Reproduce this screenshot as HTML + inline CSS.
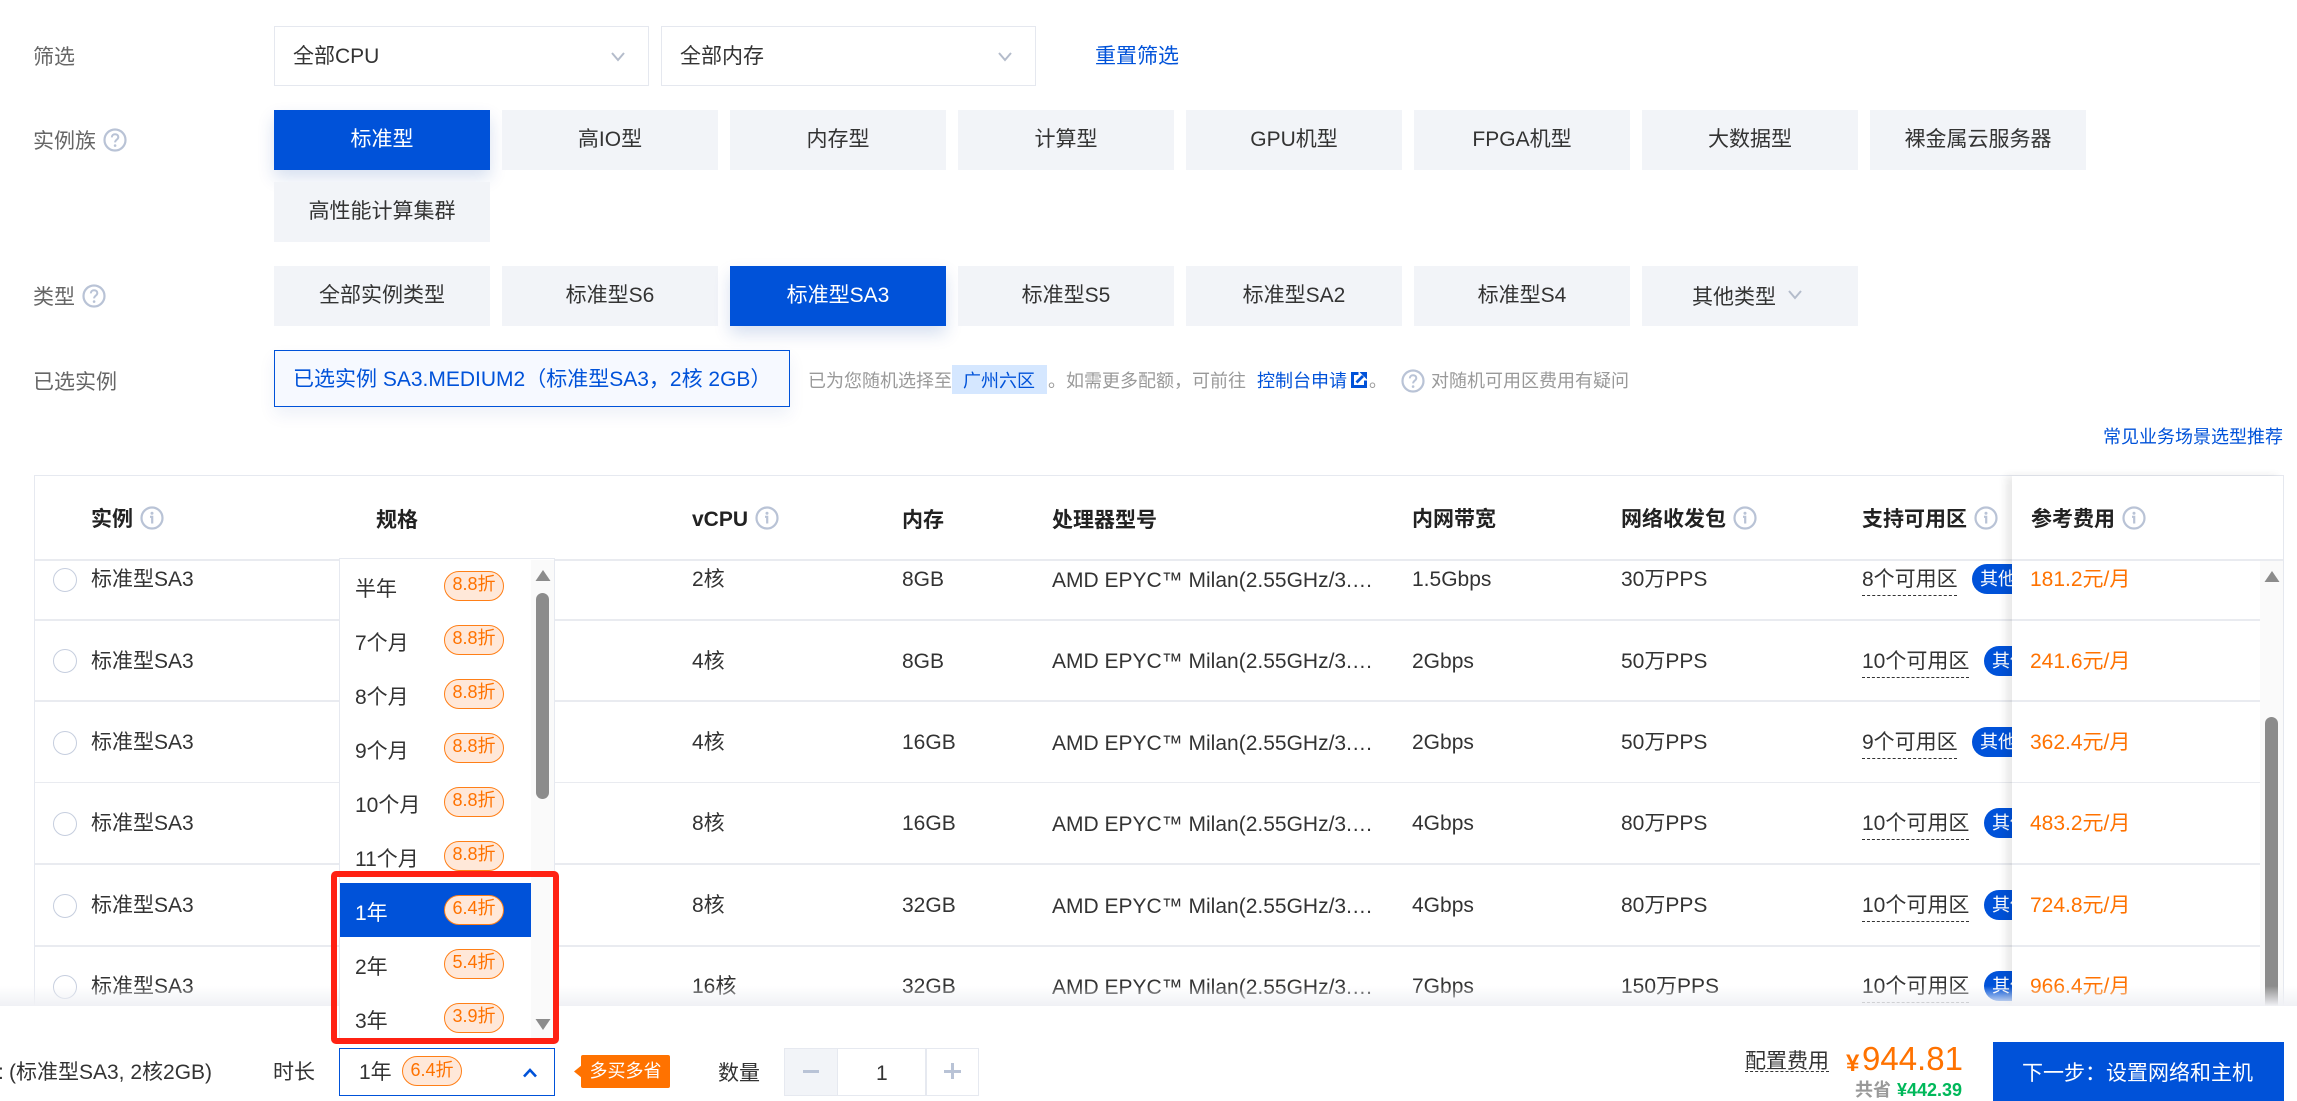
<!DOCTYPE html>
<html lang="zh-CN"><head><meta charset="utf-8"><title>实例选择</title>
<style>
html,body{margin:0;padding:0;width:2297px;height:1101px;overflow:hidden;background:#fff}
body{position:relative;font-family:"Liberation Sans","Noto Sans CJK SC",sans-serif;font-size:21px;color:#333}
.t{position:absolute;white-space:nowrap;line-height:30px;height:30px;margin-top:1.5px}
.t.c{margin-top:.5px}
.l{color:#666}
.b{font-weight:bold;color:#222}
.a{color:#0052d9}
.box{position:absolute;box-sizing:border-box}
.btn{position:absolute;width:216px;height:60px;line-height:60.5px;background:#f2f4f8;text-align:center;color:#333;white-space:nowrap}
.sel{background:#0052d9;color:#fff;box-shadow:0 8px 16px rgba(0,60,160,.16)}
.sv{position:absolute}
.h{position:absolute;height:1.5px;background:#e9ebf0;left:35px;width:2225px}
.r{position:absolute;left:53px;width:24px;height:24px;box-sizing:border-box;border:1.5px solid #c6cede;border-radius:50%;background:#fff}
.u{position:absolute;height:0;border-bottom:1.5px dashed #333}
.tag{position:absolute;height:30px;line-height:30px;width:60px;background:#0052d9;color:#fff;font-size:18px;border-radius:15px;padding-left:8px;box-sizing:border-box;white-space:nowrap}
.p{color:#ff7200}
.pill{position:absolute;box-sizing:border-box;left:444px;width:60px;height:30px;line-height:24px;border:1.5px solid #ff7f17;background:#ffe8d9;color:#ff7200;border-radius:15px;font-size:18px;text-align:center;white-space:nowrap}
</style></head><body>

<!-- filter row -->
<div class="t l" style="left:33px;top:41px">筛选</div>
<div class="box" style="left:274px;top:26px;width:375px;height:60px;border:1.5px solid #e5e8ef"></div>
<div class="t" style="left:293px;top:40px">全部CPU</div>
<svg class="sv" style="left:610px;top:51px" width="16" height="12" viewBox="0 0 16 12"><path d="M2 2l6 7 6-7" fill="none" stroke="#b4bccb" stroke-width="2"/></svg>
<div class="box" style="left:661px;top:26px;width:375px;height:60px;border:1.5px solid #e5e8ef"></div>
<div class="t" style="left:680px;top:40px">全部内存</div>
<svg class="sv" style="left:997px;top:51px" width="16" height="12" viewBox="0 0 16 12"><path d="M2 2l6 7 6-7" fill="none" stroke="#b4bccb" stroke-width="2"/></svg>
<div class="t a" style="left:1095px;top:40px">重置筛选</div>

<!-- family -->
<div class="t l" style="left:33px;top:125px">实例族</div>
<svg class="sv" style="left:103px;top:128px" width="24" height="24" viewBox="0 0 24 24"><circle cx="12" cy="12" r="10.5" fill="none" stroke="#b9c3d6" stroke-width="2.2"/><path d="M8.8 9.4c0-2 1.4-3.2 3.3-3.2s3.2 1.2 3.2 2.9c0 2.5-3.2 2.6-3.2 5.3" fill="none" stroke="#b9c3d6" stroke-width="2"/><circle cx="12.1" cy="17.6" r="1.3" fill="#b9c3d6"/></svg>
<div class="btn sel" style="left:274px;top:110px">标准型</div>
<div class="btn" style="left:502px;top:110px">高IO型</div>
<div class="btn" style="left:730px;top:110px">内存型</div>
<div class="btn" style="left:958px;top:110px">计算型</div>
<div class="btn" style="left:1186px;top:110px">GPU机型</div>
<div class="btn" style="left:1414px;top:110px">FPGA机型</div>
<div class="btn" style="left:1642px;top:110px">大数据型</div>
<div class="btn" style="left:1870px;top:110px">裸金属云服务器</div>
<div class="btn" style="left:274px;top:182px">高性能计算集群</div>

<!-- type -->
<div class="t l" style="left:33px;top:281px">类型</div>
<svg class="sv" style="left:82px;top:284px" width="24" height="24" viewBox="0 0 24 24"><circle cx="12" cy="12" r="10.5" fill="none" stroke="#b9c3d6" stroke-width="2.2"/><path d="M8.8 9.4c0-2 1.4-3.2 3.3-3.2s3.2 1.2 3.2 2.9c0 2.5-3.2 2.6-3.2 5.3" fill="none" stroke="#b9c3d6" stroke-width="2"/><circle cx="12.1" cy="17.6" r="1.3" fill="#b9c3d6"/></svg>
<div class="btn" style="left:274px;top:266px">全部实例类型</div>
<div class="btn" style="left:502px;top:266px">标准型S6</div>
<div class="btn sel" style="left:730px;top:266px">标准型SA3</div>
<div class="btn" style="left:958px;top:266px">标准型S5</div>
<div class="btn" style="left:1186px;top:266px">标准型SA2</div>
<div class="btn" style="left:1414px;top:266px">标准型S4</div>
<div class="btn" style="left:1642px;top:266px"></div>
<div class="t" style="left:1692px;top:281px">其他类型</div>
<svg class="sv" style="left:1787px;top:289px" width="16" height="12" viewBox="0 0 16 12"><path d="M2 2l6 7 6-7" fill="none" stroke="#b4bccb" stroke-width="2"/></svg>

<!-- selected -->
<div class="t l" style="left:33px;top:366px">已选实例</div>
<div class="box" style="left:274px;top:350px;width:516px;height:57px;background:#f6f9ff;border:1.5px solid #0052d9;box-shadow:0 8px 16px rgba(0,60,160,.07)"></div>
<div class="t a" style="left:293px;top:363px">已选实例 SA3.MEDIUM2（标准型SA3，2核 2GB）</div>
<div class="t" style="left:808px;top:364px;font-size:18px;color:#999">已为您随机选择至</div>
<div class="box" style="left:952px;top:365px;width:95px;height:29px;background:#d5e7ff"></div>
<div class="t a" style="left:963px;top:364px;font-size:18px">广州六区</div>
<div class="t" style="left:1048px;top:364px;font-size:18px;color:#999">。如需更多配额，可前往</div>
<div class="t a" style="left:1257px;top:364px;font-size:18px">控制台申请</div>
<svg class="sv" style="left:1351px;top:371.5px" width="16" height="16" viewBox="0 0 16 16"><path d="M7.5 1.5H1.5v13h13V8.5" fill="none" stroke="#0052d9" stroke-width="3"/><path d="M5.5 10.5L12 4" fill="none" stroke="#0052d9" stroke-width="2.8"/><path d="M8.5 0H16v7.5z" fill="#0052d9"/></svg>
<div class="t" style="left:1369px;top:364px;font-size:18px;color:#999">。</div>
<svg class="sv" style="left:1401px;top:369px" width="24" height="24" viewBox="0 0 24 24"><circle cx="12" cy="12" r="10.5" fill="none" stroke="#b9c3d6" stroke-width="2.2"/><path d="M8.8 9.4c0-2 1.4-3.2 3.3-3.2s3.2 1.2 3.2 2.9c0 2.5-3.2 2.6-3.2 5.3" fill="none" stroke="#b9c3d6" stroke-width="2"/><circle cx="12.1" cy="17.6" r="1.3" fill="#b9c3d6"/></svg>
<div class="t" style="left:1431px;top:364px;font-size:18px;color:#999">对随机可用区费用有疑问</div>
<div class="t a" style="left:2103px;top:420px;font-size:18px">常见业务场景选型推荐</div>

<!-- table frame -->
<div class="box" style="left:34px;top:475px;width:2250px;height:540px;border:1.5px solid #e6e9f0"></div>
<div class="h" style="top:559px;width:2248px"></div>
<div class="h" style="top:619px"></div>
<div class="h" style="top:700px"></div>
<div class="h" style="top:781.5px"></div>
<div class="h" style="top:863px"></div>
<div class="h" style="top:945px"></div>

<!-- header -->
<div class="t b" style="left:91px;top:503px">实例</div>
<div class="t b" style="left:376px;top:504px">规格</div>
<div class="t b" style="left:692px;top:503px">vCPU</div>
<div class="t b" style="left:902px;top:504px">内存</div>
<div class="t b" style="left:1052px;top:504px">处理器型号</div>
<div class="t b" style="left:1412px;top:503px">内网带宽</div>
<div class="t b" style="left:1621px;top:503px">网络收发包</div>
<div class="t b" style="left:1862px;top:503px">支持可用区</div>
<svg class="sv" style="left:140px;top:506px" width="24" height="24" viewBox="0 0 24 24"><circle cx="12" cy="12" r="10.5" fill="none" stroke="#b9c3d6" stroke-width="2.2"/><circle cx="12" cy="7.2" r="1.5" fill="#b9c3d6"/><path d="M10 10.8H12.2V17.5" fill="none" stroke="#b9c3d6" stroke-width="2.2"/></svg>
<svg class="sv" style="left:755px;top:506px" width="24" height="24" viewBox="0 0 24 24"><circle cx="12" cy="12" r="10.5" fill="none" stroke="#b9c3d6" stroke-width="2.2"/><circle cx="12" cy="7.2" r="1.5" fill="#b9c3d6"/><path d="M10 10.8H12.2V17.5" fill="none" stroke="#b9c3d6" stroke-width="2.2"/></svg>
<svg class="sv" style="left:1733px;top:506px" width="24" height="24" viewBox="0 0 24 24"><circle cx="12" cy="12" r="10.5" fill="none" stroke="#b9c3d6" stroke-width="2.2"/><circle cx="12" cy="7.2" r="1.5" fill="#b9c3d6"/><path d="M10 10.8H12.2V17.5" fill="none" stroke="#b9c3d6" stroke-width="2.2"/></svg>
<svg class="sv" style="left:1974px;top:506px" width="24" height="24" viewBox="0 0 24 24"><circle cx="12" cy="12" r="10.5" fill="none" stroke="#b9c3d6" stroke-width="2.2"/><circle cx="12" cy="7.2" r="1.5" fill="#b9c3d6"/><path d="M10 10.8H12.2V17.5" fill="none" stroke="#b9c3d6" stroke-width="2.2"/></svg>

<!-- row 1 -->
<div class="r" style="top:568px"></div>
<div class="t c" style="left:91px;top:564px">标准型SA3</div>
<div class="t c" style="left:692px;top:564px">2核</div>
<div class="t c" style="left:902px;top:564px">8GB</div>
<div class="t c" style="left:1052px;top:565px">AMD EPYC™ Milan(2.55GHz/3.…</div>
<div class="t c" style="left:1412px;top:564px">1.5Gbps</div>
<div class="t c" style="left:1621px;top:564px">30万PPS</div>
<div class="t c" style="left:1862px;top:564px">8个可用区</div>
<div class="u" style="left:1862px;top:595px;width:95px"></div>
<div class="tag" style="left:1972px;top:564px">其他</div>
<!-- row 2 -->
<div class="r" style="top:649px"></div>
<div class="t c" style="left:91px;top:646px">标准型SA3</div>
<div class="t c" style="left:692px;top:646px">4核</div>
<div class="t c" style="left:902px;top:646px">8GB</div>
<div class="t c" style="left:1052px;top:646px">AMD EPYC™ Milan(2.55GHz/3.…</div>
<div class="t c" style="left:1412px;top:646px">2Gbps</div>
<div class="t c" style="left:1621px;top:646px">50万PPS</div>
<div class="t c" style="left:1862px;top:646px">10个可用区</div>
<div class="u" style="left:1862px;top:677px;width:107px"></div>
<div class="tag" style="left:1984px;top:646px">其他</div>
<!-- row 3 -->
<div class="r" style="top:731px"></div>
<div class="t c" style="left:91px;top:727px">标准型SA3</div>
<div class="t c" style="left:692px;top:727px">4核</div>
<div class="t c" style="left:902px;top:727px">16GB</div>
<div class="t c" style="left:1052px;top:728px">AMD EPYC™ Milan(2.55GHz/3.…</div>
<div class="t c" style="left:1412px;top:727px">2Gbps</div>
<div class="t c" style="left:1621px;top:727px">50万PPS</div>
<div class="t c" style="left:1862px;top:727px">9个可用区</div>
<div class="u" style="left:1862px;top:758px;width:95px"></div>
<div class="tag" style="left:1972px;top:727px">其他</div>
<!-- row 4 -->
<div class="r" style="top:812px"></div>
<div class="t c" style="left:91px;top:808px">标准型SA3</div>
<div class="t c" style="left:692px;top:808px">8核</div>
<div class="t c" style="left:902px;top:808px">16GB</div>
<div class="t c" style="left:1052px;top:809px">AMD EPYC™ Milan(2.55GHz/3.…</div>
<div class="t c" style="left:1412px;top:808px">4Gbps</div>
<div class="t c" style="left:1621px;top:808px">80万PPS</div>
<div class="t c" style="left:1862px;top:808px">10个可用区</div>
<div class="u" style="left:1862px;top:839px;width:107px"></div>
<div class="tag" style="left:1984px;top:808px">其他</div>
<!-- row 5 -->
<div class="r" style="top:894px"></div>
<div class="t c" style="left:91px;top:890px">标准型SA3</div>
<div class="t c" style="left:692px;top:890px">8核</div>
<div class="t c" style="left:902px;top:890px">32GB</div>
<div class="t c" style="left:1052px;top:891px">AMD EPYC™ Milan(2.55GHz/3.…</div>
<div class="t c" style="left:1412px;top:890px">4Gbps</div>
<div class="t c" style="left:1621px;top:890px">80万PPS</div>
<div class="t c" style="left:1862px;top:890px">10个可用区</div>
<div class="u" style="left:1862px;top:921px;width:107px"></div>
<div class="tag" style="left:1984px;top:890px">其他</div>
<!-- row 6 -->
<div class="r" style="top:975px"></div>
<div class="t c" style="left:91px;top:971px">标准型SA3</div>
<div class="t c" style="left:692px;top:971px">16核</div>
<div class="t c" style="left:902px;top:971px">32GB</div>
<div class="t c" style="left:1052px;top:972px">AMD EPYC™ Milan(2.55GHz/3.…</div>
<div class="t c" style="left:1412px;top:971px">7Gbps</div>
<div class="t c" style="left:1621px;top:971px">150万PPS</div>
<div class="t c" style="left:1862px;top:971px">10个可用区</div>
<div class="u" style="left:1862px;top:1002px;width:107px"></div>
<div class="tag" style="left:1984px;top:971px">其他</div>

<!-- fixed column -->
<div class="box" style="left:2012px;top:476px;width:271px;height:530px;background:#fff;box-shadow:-6px 0 8px rgba(0,0,0,.09)"></div>
<div class="h" style="top:559px;left:2012px;width:271px"></div>
<div class="h" style="top:619px;left:2012px;width:248px"></div>
<div class="h" style="top:700px;left:2012px;width:248px"></div>
<div class="h" style="top:781.5px;left:2012px;width:248px"></div>
<div class="h" style="top:863px;left:2012px;width:248px"></div>
<div class="h" style="top:945px;left:2012px;width:248px"></div>
<div class="t b" style="left:2031px;top:503px">参考费用</div>
<svg class="sv" style="left:2122px;top:506px" width="24" height="24" viewBox="0 0 24 24"><circle cx="12" cy="12" r="10.5" fill="none" stroke="#b9c3d6" stroke-width="2.2"/><circle cx="12" cy="7.2" r="1.5" fill="#b9c3d6"/><path d="M10 10.8H12.2V17.5" fill="none" stroke="#b9c3d6" stroke-width="2.2"/></svg>
<div class="t p c" style="left:2030px;top:564px">181.2元/月</div>
<div class="t p c" style="left:2030px;top:646px">241.6元/月</div>
<div class="t p c" style="left:2030px;top:727px">362.4元/月</div>
<div class="t p c" style="left:2030px;top:808px">483.2元/月</div>
<div class="t p c" style="left:2030px;top:890px">724.8元/月</div>
<div class="t p c" style="left:2030px;top:971px">966.4元/月</div>
<div class="box" style="left:2260px;top:561px;width:23px;height:445px;background:#fafafa"></div>
<svg class="sv" style="left:2264px;top:571px" width="16" height="11" viewBox="0 0 16 11"><path d="M8 0L15.5 11H.5z" fill="#8c8c8c"/></svg>
<div class="box" style="left:2265px;top:717px;width:13px;height:300px;background:#8c8c8c;border-radius:6.5px"></div>

<!-- bottom bar -->
<div class="box" style="left:0;top:986px;width:2297px;height:20px;background:linear-gradient(rgba(240,241,245,0),#f0f1f5)"></div>
<div class="box" style="left:0;top:1006px;width:2297px;height:95px;background:#fff"></div>

<div class="t" style="left:-2px;top:1056px">:</div>
<div class="t" style="left:9px;top:1056px">(标准型SA3, 2核2GB)</div>
<div class="t" style="left:273px;top:1056px">时长</div>
<div class="box" style="left:339px;top:1048px;width:216px;height:48px;border:1.5px solid #0052d9;background:#fff"></div>
<div class="t" style="left:359px;top:1056px">1年</div>
<div class="pill" style="left:402px;top:1056px;line-height:26px">6.4折</div>
<svg class="sv" style="left:522px;top:1067px" width="16" height="11" viewBox="0 0 16 11"><path d="M2 9.5l6-6.5 6 6.5" fill="none" stroke="#0052d9" stroke-width="2.6"/></svg>
<div class="box" style="left:581px;top:1055px;width:89px;height:33px;background:#ff7200;color:#fff;font-size:18px;line-height:32px;text-align:center;border-radius:2px;white-space:nowrap">多买多省</div>
<svg class="sv" style="left:574px;top:1065px" width="8" height="13" viewBox="0 0 8 13"><path d="M8 0L0 6.5 8 13z" fill="#ff7200"/></svg>
<div class="t" style="left:718px;top:1057px">数量</div>
<div class="box" style="left:784px;top:1048px;width:195px;height:48px;border:1.5px solid #e6e9f0"></div>
<div class="box" style="left:784px;top:1048px;width:54px;height:48px;background:#f2f4f8;border:1.5px solid #e6e9f0"></div>
<div class="box" style="left:925px;top:1048px;width:1.5px;height:48px;background:#e6e9f0"></div>
<div class="box" style="left:803px;top:1069.5px;width:16px;height:3px;background:#b9c3d6"></div>
<div class="box" style="left:944px;top:1069.5px;width:17px;height:3px;background:#b9c3d6"></div>
<div class="box" style="left:951px;top:1063px;width:3px;height:16px;background:#b9c3d6"></div>
<div class="t" style="left:876px;top:1057px">1</div>

<div class="t" style="left:1745px;top:1045px">配置费用</div>
<div class="u" style="left:1745px;top:1071px;width:84px"></div>
<div class="t p" style="left:1846px;top:1047px;font-size:24px;font-weight:bold">¥</div>
<div class="t p" style="left:1862px;top:1042px;font-size:33px">944.81</div>
<div class="t" style="left:1855px;top:1073px;font-size:18px;font-weight:bold;color:#999">共省</div>
<div class="t" style="left:1897px;top:1073px;font-size:18px;font-weight:bold;color:#00b85a">¥442.39</div>
<div class="box" style="left:1993px;top:1042px;width:291px;height:59px;background:#0052d9"></div>
<div class="t" style="left:2022px;top:1057px;color:#fff">下一步：设置网络和主机</div>

<!-- dropdown -->
<div class="box" style="left:339px;top:558px;width:216px;height:482px;background:#fff;border:1.5px solid #e6e9f0"></div>
<div class="box" style="left:531px;top:559.5px;width:22.5px;height:479px;background:#fafafa"></div>
<div class="box" style="left:340px;top:883px;width:191px;height:54px;background:#0052d9"></div>
<div class="t c" style="left:355px;top:574px">半年</div>
<div class="pill" style="top:571px">8.8折</div>
<div class="t c" style="left:355px;top:628px">7个月</div>
<div class="pill" style="top:625px">8.8折</div>
<div class="t c" style="left:355px;top:682px">8个月</div>
<div class="pill" style="top:679px">8.8折</div>
<div class="t c" style="left:355px;top:736px">9个月</div>
<div class="pill" style="top:733px">8.8折</div>
<div class="t c" style="left:355px;top:790px">10个月</div>
<div class="pill" style="top:787px">8.8折</div>
<div class="t c" style="left:355px;top:844px">11个月</div>
<div class="pill" style="top:841px">8.8折</div>
<div class="t c" style="left:355px;top:898px;color:#fff">1年</div>
<div class="pill" style="top:895px">6.4折</div>
<div class="t c" style="left:355px;top:952px">2年</div>
<div class="pill" style="top:949px">5.4折</div>
<div class="t c" style="left:355px;top:1006px">3年</div>
<div class="pill" style="top:1003px">3.9折</div>
<svg class="sv" style="left:535px;top:570px" width="16" height="11" viewBox="0 0 16 11"><path d="M8 0L15.5 11H.5z" fill="#8c8c8c"/></svg>
<div class="box" style="left:536px;top:593px;width:13px;height:206px;background:#8c8c8c;border-radius:6.5px"></div>
<svg class="sv" style="left:535px;top:1019px" width="16" height="11" viewBox="0 0 16 11"><path d="M8 11L15.5 0H.5z" fill="#8c8c8c"/></svg>

<!-- red box -->
<div class="box" style="left:331px;top:871px;width:228px;height:173px;border:6px solid #ff2113;border-radius:5px"></div>
</body></html>
